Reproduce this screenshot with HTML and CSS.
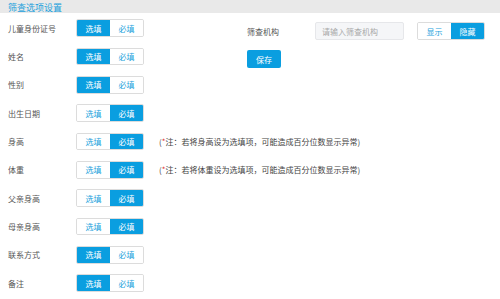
FILE: index.html
```html
<!DOCTYPE html>
<html lang="zh">
<head>
<meta charset="utf-8">
<link rel="stylesheet" href="styles.css">
</head>
<body>
<div class="header"><span class="title">筛查选项设置</span></div>
<div class="content">
  <div class="left">
    <div class="row"><span class="label">儿童身份证号</span><div class="seg"><span class="opt on">选填</span><span class="opt">必填</span></div></div>
    <div class="row"><span class="label">姓名</span><div class="seg"><span class="opt on">选填</span><span class="opt">必填</span></div></div>
    <div class="row"><span class="label">性别</span><div class="seg"><span class="opt on">选填</span><span class="opt">必填</span></div></div>
    <div class="row"><span class="label">出生日期</span><div class="seg"><span class="opt">选填</span><span class="opt on">必填</span></div></div>
    <div class="row"><span class="label">身高</span><div class="seg"><span class="opt">选填</span><span class="opt on">必填</span></div><span class="note">(<span class="star">*</span>注：若将身高设为选填项，可能造成百分位数显示异常)</span></div>
    <div class="row"><span class="label">体重</span><div class="seg"><span class="opt">选填</span><span class="opt on">必填</span></div><span class="note">(<span class="star">*</span>注：若将体重设为选填项，可能造成百分位数显示异常)</span></div>
    <div class="row"><span class="label">父亲身高</span><div class="seg"><span class="opt">选填</span><span class="opt on">必填</span></div></div>
    <div class="row"><span class="label">母亲身高</span><div class="seg"><span class="opt">选填</span><span class="opt on">必填</span></div></div>
    <div class="row"><span class="label">联系方式</span><div class="seg"><span class="opt on">选填</span><span class="opt">必填</span></div></div>
    <div class="row"><span class="label">备注</span><div class="seg"><span class="opt on">选填</span><span class="opt">必填</span></div></div>
  </div>
  <div class="right">
    <div class="rrow">
      <span class="rlabel">筛查机构</span>
      <div class="input">请输入筛查机构</div>
      <div class="seg"><span class="opt">显示</span><span class="opt on">隐藏</span></div>
    </div>
    <div class="save">保存</div>
  </div>
</div>
</body>
</html>
```

FILE: styles.css
```css
html, body {
  margin: 0;
  padding: 0;
  background: #fff;
}
body {
  font-family: "Noto Sans CJK SC", "Noto Sans", sans-serif;
  font-size: 8px;
  color: #555;
  width: 500px;
  height: 299px;
  overflow: hidden;
}
.header {
  height: 13px;
  background: #e9e9e9;
  display: flex;
  align-items: flex-end;
  padding-left: 8px;
}
.title {
  color: #1a9fdc;
  font-size: 9px;
  line-height: 11px;
}
.content {
  display: flex;
  padding-top: 1px;
}
.left {
  width: 247px;
  flex: none;
}
.row {
  height: 28.33px;
  display: flex;
  align-items: center;
  white-space: nowrap;
}
.label {
  width: 68px;
  padding-left: 8px;
  flex: none;
}
.seg {
  display: flex;
  height: 17.5px;
  border: 1px solid #dcdcdc;
  border-radius: 2px;
  box-sizing: border-box;
  overflow: hidden;
  flex: none;
}
.opt {
  width: 33px;
  display: flex;
  align-items: center;
  justify-content: center;
  color: #1a9fdc;
  background: #fff;
}
.opt.on {
  background: #0a9ee0;
  color: #fff;
}
.note {
  margin-left: 15px;
  color: #444;
}
.star {
  color: #e03030;
}
.right {
  flex: 1;
  padding-top: 8px;
}
.rrow {
  display: flex;
  align-items: center;
}
.rlabel {
  width: 68px;
  flex: none;
}
.input {
  width: 89px;
  height: 18px;
  box-sizing: border-box;
  background: #f5f6f8;
  border: 1px solid #e6e7ea;
  border-radius: 2px;
  color: #a8a8a8;
  padding-left: 6px;
  display: flex;
  align-items: center;
  margin-right: 13px;
}
.save {
  margin-top: 10px;
  width: 34px;
  height: 18px;
  background: #0a9ee0;
  color: #fff;
  border-radius: 2px;
  display: flex;
  align-items: center;
  justify-content: center;
}
```
